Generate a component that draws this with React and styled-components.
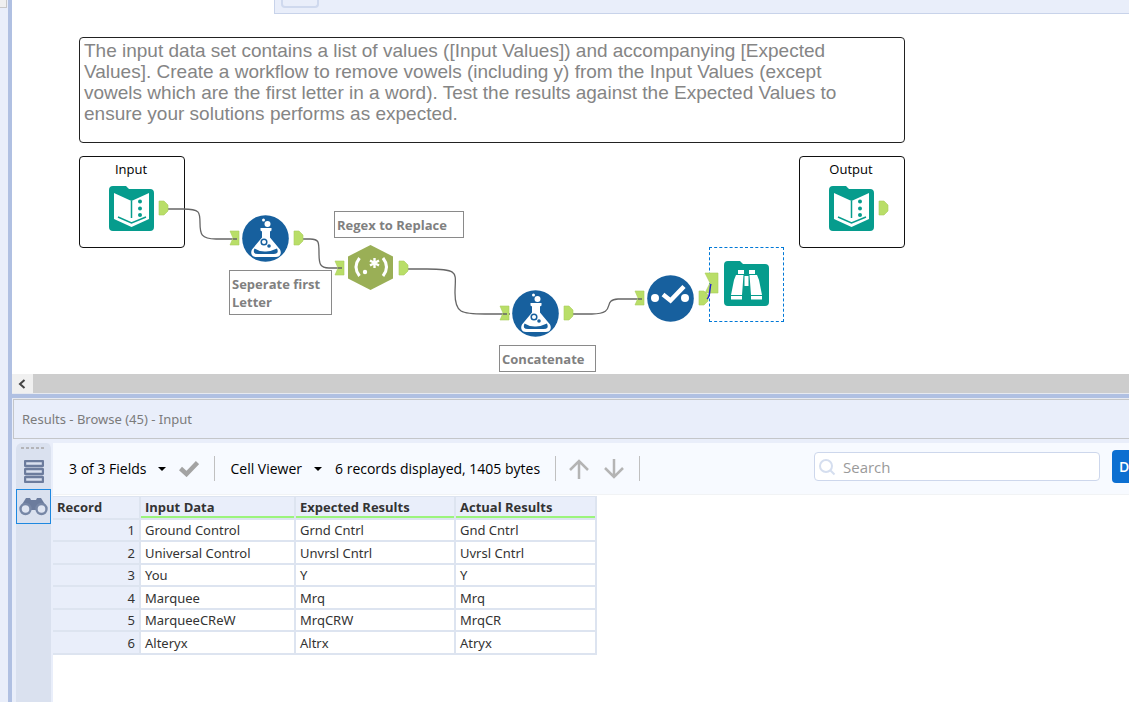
import React from "react";
import styled, { createGlobalStyle } from "styled-components";

const ui = `"Open Sans", "Noto Sans", sans-serif`;
const wideUi = `"Noto Sans", "Open Sans", sans-serif`;

const Global = createGlobalStyle`
  * { box-sizing: border-box; }
  body { margin: 0; font-family: ${ui}; font-size: 13px; color: #000; background: #fff; overflow: hidden; }
  button { font: inherit; color: inherit; background: none; border: 0; padding: 0; }
  svg { display: block; }
`;

const Window = styled.div`
  display: flex;
  min-height: 100vh;
`;

const DockStrip = styled.aside`
  flex: none;
  width: 12px;
  background: #e9eefa;
  border-right: 4px solid #b0c0e2;
`;

const DockCorner = styled.div`
  width: 7px;
  height: 8px;
  background: #f0f0f0;
  border: solid #c8c8c8;
  border-width: 0 1px 1px 0;
`;

const Main = styled.main`
  flex: 1;
  min-width: 0;
  display: flex;
  flex-direction: column;
`;

const TabBar = styled.div`
  display: flex;
  height: 14px;
`;

const Tab = styled.div`
  width: 262px;
`;

const TabRest = styled.div`
  flex: 1;
  padding-left: 6px;
  background: #e9eefa;
  border: solid #c8d3ea;
  border-width: 0 0 1px 1px;
`;

const NewTab = styled.button`
  display: block;
  width: 38px;
  height: 8px;
  border: 2px solid #cfd9ee;
  border-top: 0;
  border-radius: 0 0 4px 4px;
`;

const Canvas = styled.section`
  position: relative;
  height: 360px;
  overflow: hidden;
`;

const Wires = styled.svg`
  position: absolute;
  left: 0;
  top: 0;
`;

const Placed = styled.div`
  position: absolute;
  left: ${(p) => p.$x}px;
  top: ${(p) => p.$y}px;
`;

const Comment = styled(Placed)`
  width: 826px;
  height: 106px;
  padding: 2px 40px 2px 4px;
  border: 1px solid #222;
  border-radius: 4px;
  font: 19px/21px "Liberation Sans", Arial, sans-serif;
  color: #858585;
`;

const Container = styled(Placed)`
  width: 106px;
  height: 92px;
  padding: 3px 2px 0 0;
  border: 1px solid #111;
  border-radius: 4px;
  text-align: center;
  line-height: 18px;
`;

const Note = styled(Placed)`
  width: ${(p) => p.$w}px;
  padding: 4px 2px 3px;
  border: 1px solid #8a8a8a;
  background: #fff;
  color: #808080;
  font-weight: 700;
  line-height: 18px;
`;

const Selection = styled(Placed)`
  width: 75px;
  height: 75px;
  border: 1px dashed #0078d7;
`;

const ScrollBar = styled.div`
  display: flex;
  height: 19px;
  background: #cdcdcd;
`;

const ScrollButton = styled.button`
  display: grid;
  place-items: center;
  width: 21px;
  padding-right: 2px;
  background: #f0f0f0;
`;

const Splitter = styled.div`
  height: 6px;
  background: #b0c0e2;
  border: solid #e6e9f0;
  border-width: 1px 0;
`;

const Results = styled.section`
  flex: 1;
  display: flex;
  flex-direction: column;
  background: #e9eefa;
`;

const ResultsTitle = styled.h2`
  margin: 0 0 4px 1px;
  height: 40px;
  padding-left: 8px;
  border: 1px solid #c4c6c9;
  border-right: 0;
  font: 400 13px/38px ${wideUi};
  color: #7b7b7b;
`;

const ResultsBody = styled.div`
  flex: 1;
  display: flex;
  padding-left: 4px;
`;

const SideBar = styled.nav`
  flex: none;
  width: 37px;
  padding-top: 4px;
  background: #dae1ef;
  border-right: 2px solid #e9eefa;
  border-radius: 6px 6px 0 0;
`;

const Grip = styled.div`
  width: 23px;
  height: 2px;
  margin: 0 0 5px 5px;
  background: repeating-linear-gradient(90deg, #b4b4b8 0 3px, transparent 3px 5px);
`;

const SideButton = styled.button`
  display: grid;
  place-items: center;
  width: 35px;
  height: 35px;
  border: 1px solid ${(p) => (p.$on ? "#1e88e0" : "transparent")};
`;

const Sheet = styled.div`
  flex: 1;
  min-width: 0;
  background: #fff;
`;

const ToolBar = styled.div`
  display: flex;
  align-items: center;
  height: 52px;
  margin-bottom: 1px;
  padding-left: 16px;
  background: #f7faff;
  border-bottom: 1px solid #f1f3f5;
  font-size: 14px;
  white-space: nowrap;
  overflow: hidden;
`;

const MenuButton = styled.button`
  display: flex;
  align-items: center;
  gap: 12px;
`;

const Caret = styled.span`
  border: 4px solid transparent;
  border-top-color: #000;
  border-bottom: 0;
`;

const IconButton = styled.button`
  margin-left: ${(p) => p.$gap}px;
`;

const Divider = styled.span`
  width: 1px;
  height: 25px;
  margin: 0 ${(p) => p.$after || 0}px 0 15px;
  background: #c0c0c0;
`;

const Status = styled.span`
  margin-left: 13px;
`;

const SearchBox = styled.label`
  display: flex;
  align-items: center;
  gap: 4px;
  width: 286px;
  height: 29px;
  margin: 0 12px 4px auto;
  padding-left: 4px;
  background: #fff;
  border: 1px solid #cdd7ec;
  border-radius: 4px;
  flex: none;
`;

const SearchInput = styled.input`
  flex: 1;
  min-width: 0;
  border: 0;
  outline: 0;
  background: none;
  font: 15px ${ui};
  &::placeholder { color: #9a9a9a; opacity: 1; }
`;

const DataButton = styled.button`
  flex: none;
  width: 17px;
  height: 33px;
  margin-bottom: 4px;
  padding-left: 7px;
  overflow: hidden;
  text-align: left;
  background: #0c6fd1;
  border-radius: 4px 0 0 4px;
  color: #fff;
  font-weight: 600;
`;

const Table = styled.table`
  width: 544px;
  table-layout: fixed;
  border-collapse: separate;
  border-spacing: 0;
  border-top: 1px solid #dde4f0;
  color: #333;
`;

const Row = styled.tr`
  height: 22px;
  &:nth-child(even) { height: 23px; }
`;

const Head = styled.th`
  width: ${(p) => p.$w}px;
  height: 23px;
  padding: 0 4px 2px;
  text-align: left;
  line-height: 18px;
  background: linear-gradient(${(p) => (p.$plain ? "#e9eefa, #e9eefa" : "#9bf47c, #9bf47c")}) 0 100% / 100% 2px no-repeat #e9eefa;
  background-clip: padding-box;
  border: solid #dde4f0;
  border-width: 0 2px 2px 0;
`;

const Cell = styled.td`
  padding: 1px 4px 0;
  font-family: ${wideUi};
  line-height: 19px;
  border: solid #dde4f0;
  border-width: 0 2px 2px 0;
`;

const RecordCell = styled(Cell)`
  text-align: right;
  background: #e9eefa;
`;

const BookIcon = () => (
  <svg width="46" height="46" viewBox="0 0 46 46">
    <path d="M4 0h13l3 3h21q4 0 4 4v34q0 4-4 4H4q-4 0-4-4V4q0-4 4-4z" fill="#069c8d" />
    <path d="M5 7l17.500 8L40 7v26l-17.500 8L5 33z" fill="#fff" />
    <path d="M22.500 15v17M9 31l13.500 6L37 31" fill="none" stroke="#069c8d" strokeWidth="1.500" />
    <g fill="#069c8d"><circle cx="31" cy="15.500" r="2" /><circle cx="31" cy="22.500" r="2" /><circle cx="31" cy="29" r="2" /></g>
  </svg>
);

const FlaskIcon = () => (
  <svg width="48" height="48" viewBox="0 0 48 48">
    <circle cx="23.500" cy="23.500" r="23.300" fill="#17609e" />
    <g fill="#fff"><circle cx="21.500" cy="5" r="1.500" /><circle cx="25.500" cy="9" r="3" />
      <path d="M18.500 13h11v2.500l-1.500 1v6L38 34.500c2 4 0 7.500-4 7.500H14c-4 0-6-3.500-4-7.500l10-12v-6l-1.500-1z" />
    </g>
    <circle cx="22" cy="27" r="2.800" fill="none" stroke="#17609e" strokeWidth="1.500" />
    <circle cx="27" cy="31" r="1.800" fill="#17609e" />
    <path d="M12.500 33.500q5.500 3.500 11.500 3t11-3q2.500 5.500-3.500 5.500H16q-6 0-3.500-5.500z" fill="#17609e" />
  </svg>
);

const RegexIcon = () => (
  <svg width="46" height="46" viewBox="0 0 46 46">
    <path d="M22.500 0L45 11.500v22L22.500 45 0 33.500v-22z" fill="#9aaf56" />
    <g fill="none" stroke="#fff" strokeWidth="3"><path d="M11.500 13q-7 9 0 18M35 13q7 9 0 18" /><path d="M26.500 13v10M22 15.500l9 5M31 15.500l-9 5" strokeWidth="2.400" /></g>
    <circle cx="17" cy="27" r="2.200" fill="#fff" />
  </svg>
);

const CheckIcon = () => (
  <svg width="48" height="48" viewBox="0 0 48 48">
    <circle cx="23.500" cy="23.500" r="23.300" fill="#17609e" />
    <circle cx="8" cy="23" r="4" fill="#fff" /><circle cx="38" cy="23" r="4" fill="#fff" />
    <path d="M16 19.500l7.500 6L37 11.500" fill="none" stroke="#fff" strokeWidth="4.500" />
  </svg>
);

const BrowseIcon = () => (
  <svg width="46" height="46" viewBox="0 0 46 46">
    <path d="M4 0h12l3 3h22q4 0 4 4v34q0 4-4 4H4q-4 0-4-4V4q0-4 4-4z" fill="#069c8d" />
    <path d="M14 9h6v4h-6zM25 9h6v4h-6zM20.500 15h4v10h-4zM12 14h7.500L18 34H7l3-15zM25.500 14H33l2 5 3 15H27zM7 35h11v3.500H7zM27 35h11v3.500H27z" fill="#fff" />
  </svg>
);

const OutAnchor = ({ x, y }) => <path d={`M${x} ${y - 7}h5l4 4v6l-4 4h-5z`} fill="#b9de68" stroke="#a9cc5c" strokeWidth=".6" />;
const InAnchor = ({ x, y }) => <path d={`M${x} ${y - 7}h9v14h-9l3-7z`} fill="#b9de68" stroke="#a9cc5c" strokeWidth=".6" />;

const BinocularsIcon = () => (
  <svg width="29" height="19" viewBox="0 0 29 19" fill="#6c7c9d">
    <path d="M7 1h4l1 2h5l1-2h4l5 8-7 2-3 2h-5l-3-2-7-2z" />
    <circle cx="6.500" cy="12" r="5" fill="#dfe5f2" stroke="#7787a6" strokeWidth="2.400" />
    <circle cx="22.500" cy="12" r="5" fill="#dfe5f2" stroke="#7787a6" strokeWidth="2.400" />
  </svg>
);

const arrow = { fill: "none", stroke: "#b4b4b4", strokeWidth: 2.5 };

const rows = [
  ["Ground Control", "Grnd Cntrl", "Gnd Cntrl"],
  ["Universal Control", "Unvrsl Cntrl", "Uvrsl Cntrl"],
  ["You", "Y", "Y"],
  ["Marquee", "Mrq", "Mrq"],
  ["MarqueeCReW", "MrqCRW", "MrqCR"],
  ["Alteryx", "Altrx", "Atryx"],
];

export default function App() {
  return (
    <Window>
      <Global />
      <DockStrip><DockCorner /></DockStrip>
      <Main>
        <TabBar>
          <Tab />
          <TabRest><NewTab aria-label="New workflow" /></TabRest>
        </TabBar>
        <Canvas>
          <Comment $x={67} $y={23}>
            The input data set contains a list of values ([Input Values]) and accompanying [Expected Values]. Create a
            workflow to remove vowels (including y) from the Input Values (except vowels which are the first letter in a
            word). Test the results against the Expected Values to ensure your solutions performs as expected.
          </Comment>
          <Container $x={67} $y={142}>Input</Container>
          <Container $x={787} $y={142}>Output</Container>
          <Note $x={217} $y={256} $w={103}>Seperate first Letter</Note>
          <Note $x={322} $y={197} $w={130}>Regex to Replace</Note>
          <Note $x={487} $y={331} $w={97}>Concatenate</Note>
          <Selection $x={697} $y={233} />
          <Wires width="900" height="360" viewBox="0 0 900 360">
            <g fill="none" stroke="#666" strokeWidth="1.300">
              <path d="M156 195h15c17 0 17 3 17 14s1 16 16 16h20" />
              <path d="M290 225h8c9 0 9 3 9 14s1 15 10 15h14" />
              <path d="M395 255h20c34 0 28 4 28 24s6 21 30 21h25" />
              <path d="M560 300h20c26 0 9-14 26-15h22" />
            </g>
            <OutAnchor x={147} y={194} />
            <InAnchor x={218} y={224} />
            <OutAnchor x={282} y={224} />
            <InAnchor x={323} y={254} />
            <OutAnchor x={387} y={254} />
            <InAnchor x={488} y={299} />
            <OutAnchor x={552} y={299} />
            <InAnchor x={623} y={284} />
            <OutAnchor x={687} y={284} />
            <path d="M693 259h13v20h-13l5-10z" fill="#b9de68" stroke="#a9cc5c" strokeWidth=".6" />
            <path d="M695 285c4-3 2-11 4-15" fill="none" stroke="#2222cc" strokeWidth="1.500" />
            <OutAnchor x={867} y={194} />
            <path d="M221 225h4M326 254h4M491 300h4M626 285h4" stroke="#666" strokeWidth="1.300" />
          </Wires>
          <Placed $x={97} $y={172}><BookIcon /></Placed>
          <Placed $x={817} $y={172}><BookIcon /></Placed>
          <Placed $x={230} $y={201}><FlaskIcon /></Placed>
          <Placed $x={336} $y={231}><RegexIcon /></Placed>
          <Placed $x={500} $y={276}><FlaskIcon /></Placed>
          <Placed $x={635} $y={261}><CheckIcon /></Placed>
          <Placed $x={712} $y={247}><BrowseIcon /></Placed>
        </Canvas>
        <ScrollBar>
          <ScrollButton aria-label="Scroll left">
            <svg width="8" height="10" viewBox="0 0 8 10"><path d="M6.500 1L2 5l4.500 4" fill="none" stroke="#444" strokeWidth="2" /></svg>
          </ScrollButton>
        </ScrollBar>
        <Splitter />
        <Results>
          <ResultsTitle>Results - Browse (45) - Input</ResultsTitle>
          <ResultsBody>
            <SideBar>
              <Grip />
              <SideButton aria-label="Messages">
                <svg width="20" height="23" viewBox="0 0 20 23" fill="none" stroke="#6c7c9d" strokeWidth="2.400">
                  <rect x="1" y="1" width="18" height="5" rx="1" /><rect x="1" y="9" width="18" height="5" rx="1" /><rect x="1" y="17" width="18" height="5" rx="1" />
                </svg>
              </SideButton>
              <SideButton $on aria-label="Browse"><BinocularsIcon /></SideButton>
            </SideBar>
            <Sheet>
              <ToolBar>
                <MenuButton>3 of 3 Fields<Caret /></MenuButton>
                <IconButton $gap={13} aria-label="Apply">
                  <svg width="20" height="17" viewBox="0 0 20 17"><path d="M1.500 8.500L7.500 14 18.500 2.500" fill="none" stroke="#a3a3a3" strokeWidth="4.500" /></svg>
                </IconButton>
                <Divider $after={15} />
                <MenuButton>Cell Viewer<Caret /></MenuButton>
                <Status>6 records displayed, 1405 bytes</Status>
                <Divider />
                <IconButton $gap={13} aria-label="Previous">
                  <svg width="20" height="20" viewBox="0 0 20 20" {...arrow}><path d="M10 20V2M1 11l9-9 9 9" /></svg>
                </IconButton>
                <IconButton $gap={15} aria-label="Next">
                  <svg width="20" height="20" viewBox="0 0 20 20" {...arrow}><path d="M10 0v18M1 9l9 9 9-9" /></svg>
                </IconButton>
                <Divider />
                <SearchBox>
                  <svg width="18" height="18" viewBox="0 0 18 18" fill="none" stroke="#d5deef" strokeWidth="2"><circle cx="7" cy="8" r="6" /><path d="M11.500 12.500l4 4" /></svg>
                  <SearchInput placeholder="Search" aria-label="Search" />
                </SearchBox>
                <DataButton>D</DataButton>
              </ToolBar>
              <Table>
                <thead>
                  <tr>
                    <Head $w={88} $plain>Record</Head>
                    <Head $w={155}>Input Data</Head>
                    <Head $w={160}>Expected Results</Head>
                    <Head $w={141}>Actual Results</Head>
                  </tr>
                </thead>
                <tbody>
                  {rows.map((r, i) => (
                    <Row key={i}>
                      <RecordCell>{i + 1}</RecordCell>
                      {r.map((v, j) => <Cell key={j}>{v}</Cell>)}
                    </Row>
                  ))}
                </tbody>
              </Table>
            </Sheet>
          </ResultsBody>
        </Results>
      </Main>
    </Window>
  );
}
